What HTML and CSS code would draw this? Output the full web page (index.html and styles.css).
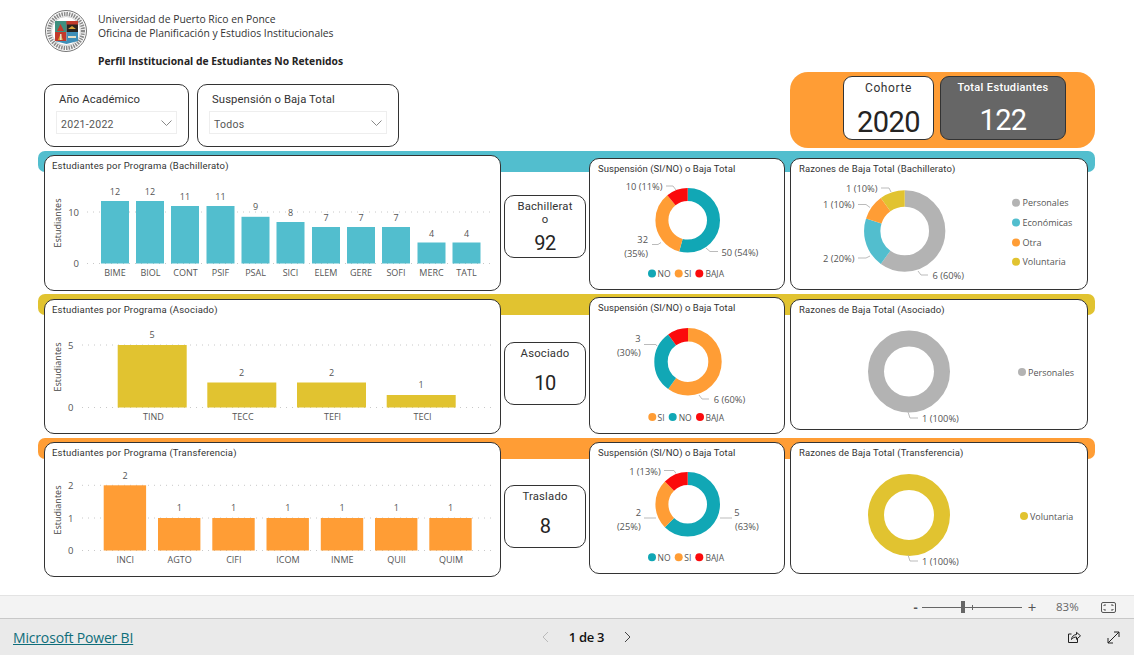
FILE: index.html
```html
<!DOCTYPE html>
<html lang="es">
<head>
<meta charset="utf-8">
<title>Perfil Institucional de Estudiantes No Retenidos</title>
<link rel="stylesheet" href="styles.css">
</head>
<body>
<div class="page">
<main class="stage">
  <section class="top">
    <div class="top-left">
      <header class="brand">
        <svg class="logo" width="42" height="42" viewBox="0 0 42 42">
          <circle class="seal-bg" cx="21" cy="21" r="20.5"/>
          <circle class="seal-ring" cx="21" cy="21" r="17"/>
          <circle class="seal-thin" cx="21" cy="21" r="14.500"/>
          <rect class="q-green" x="10" y="11" width="11.500" height="11"/>
          <rect class="q-dark" x="21.500" y="11" width="11.500" height="11"/>
          <rect class="q-red" x="10" y="22" width="11.500" height="9"/>
          <rect class="q-blue" x="21.500" y="22" width="11.500" height="9"/>
          <path class="q-red" d="M12 21l3.500-7 3.500 7zM21.500 11H33v3.500H21.500z"/>
          <path class="q-gold" d="M23 19l4-3 4 3zM13 30l2.500-6 2.500 6z"/>
          <path class="q-light" d="M23 26h8v2h-8zM15 24h1.500v6H15z"/>
          <path class="q-blue" d="M10 31h23l-11.500 3z"/>
        </svg>
        <div class="brand-text">
          <p class="brand-line">Universidad de Puerto Rico en Ponce</p>
          <p class="brand-line">Oficina de Planificación y Estudios Institucionales</p>
          <h1 class="brand-title">Perfil Institucional de Estudiantes No Retenidos</h1>
        </div>
      </header>
      <div class="filters">
        <div class="slicer slicer-year">
          <div class="slicer-label">Año Académico</div>
          <div class="dropdown"><span class="dropdown-text">2021-2022</span>
            <svg class="chev" width="11" height="6" viewBox="0 0 11 6"><path d="M.5.5l5 5 5-5"/></svg>
          </div>
        </div>
        <div class="slicer slicer-susp">
          <div class="slicer-label">Suspensión o Baja Total</div>
          <div class="dropdown"><span class="dropdown-text">Todos</span>
            <svg class="chev" width="11" height="6" viewBox="0 0 11 6"><path d="M.5.5l5 5 5-5"/></svg>
          </div>
        </div>
      </div>
    </div>
    <div class="summary">
      <div class="stat stat-cohort">
        <div class="stat-label">Cohorte</div>
        <div class="stat-value">2020</div>
      </div>
      <div class="stat stat-total">
        <div class="stat-label">Total Estudiantes</div>
        <div class="stat-value">122</div>
      </div>
    </div>
  </section>

  <!-- Bachillerato -->
  <section class="row row-1">
    <div class="band band-teal"></div>
    <article class="tile t-chart">
      <h2 class="tile-title">Estudiantes por Programa (Bachillerato)</h2>
      <svg width="455" height="117" viewBox="45 172 455 117">
        <line class="grid" x1="87" x2="495" y1="212" y2="212"/>
        <line class="grid" x1="87" x2="495" y1="263.5" y2="263.5"/>
        <text class="axis-title" transform="translate(57 223) rotate(-90)">Estudiantes</text>
        <text class="axis end" x="79" y="212">10</text>
        <text class="axis end" x="79" y="263.5">0</text>
        <g class="f-teal">
          <rect x="101" y="201" width="28" height="62.5"/>
          <rect x="136" y="201" width="28" height="62.5"/>
          <rect x="171" y="206" width="28" height="57.5"/>
          <rect x="206.500" y="206" width="28" height="57.5"/>
          <rect x="241.500" y="216.800" width="28" height="46.7"/>
          <rect x="276.500" y="222" width="28" height="41.5"/>
          <rect x="312" y="227" width="28" height="36.500"/>
          <rect x="347" y="227" width="28" height="36.500"/>
          <rect x="382" y="227" width="28" height="36.500"/>
          <rect x="417.500" y="242.500" width="28" height="21"/>
          <rect x="452.500" y="242.500" width="28" height="21"/>
        </g>
        <g class="val">
          <text x="115" y="191.500">12</text><text x="150" y="191.500">12</text>
          <text x="185" y="196.500">11</text><text x="220.500" y="196.500">11</text>
          <text x="255.500" y="206.500">9</text><text x="290.500" y="212">8</text>
          <text x="326" y="217.500">7</text><text x="361" y="217.500">7</text>
          <text x="396" y="217.500">7</text><text x="431.500" y="233">4</text>
          <text x="466.500" y="233">4</text>
        </g>
        <g class="cat">
          <text x="115" y="272.500">BIME</text><text x="150.500" y="272.500">BIOL</text>
          <text x="185.500" y="272.500">CONT</text><text x="220.500" y="272.500">PSIF</text>
          <text x="255.500" y="272.500">PSAL</text><text x="290.500" y="272.500">SICI</text>
          <text x="326" y="272.500">ELEM</text><text x="361" y="272.500">GERE</text>
          <text x="396" y="272.500">SOFI</text><text x="431.500" y="272.500">MERC</text>
          <text x="466.500" y="272.500">TATL</text>
        </g>
      </svg>
    </article>
    <article class="kpi">
      <div class="kpi-label">Bachillerat<br>o</div>
      <div class="kpi-value kpi-value-wrapped">92</div>
    </article>
    <article class="tile t-donut">
      <h2 class="tile-title">Suspensión (SI/NO) o Baja Total</h2>
      <svg width="194" height="114" viewBox="590 175 194 114">
        <g class="ring ring-s" transform="rotate(-90 687.700 220.300)">
          <circle class="s-no" cx="687.700" cy="220.300" r="25.800" pathLength="100" stroke-dasharray="54.300 45.700"/>
          <circle class="s-or" cx="687.700" cy="220.300" r="25.800" pathLength="100" stroke-dasharray="34.800 65.200" stroke-dashoffset="-54.300"/>
          <circle class="s-red" cx="687.700" cy="220.300" r="25.800" pathLength="100" stroke-dasharray="10.900 89.100" stroke-dashoffset="-89.100"/>
        </g>
        <path class="lead" d="M666 186h7l3 4M652 244.500h6l3-2M706 248l4 3.500h8"/>
        <text class="lab end" x="662.500" y="186.500">10 (11%)</text>
        <text class="lab end" x="648" y="239">32</text>
        <text class="lab end" x="648" y="253">(35%)</text>
        <text class="lab" x="721.500" y="252">50 (54%)</text>
        <circle class="f-no" cx="652" cy="273.500" r="4"/><text class="leg" x="657.500" y="273.500">NO</text>
        <circle class="f-or" cx="678.700" cy="273.500" r="4"/><text class="leg" x="684.300" y="273.500">SI</text>
        <circle class="f-red" cx="699.300" cy="273.500" r="4"/><text class="leg" x="705.500" y="273.500">BAJA</text>
      </svg>
    </article>
    <article class="tile t-reason">
      <h2 class="tile-title">Razones de Baja Total (Bachillerato)</h2>
      <svg width="296" height="114" viewBox="791 175 296 114">
        <g class="ring ring-r" transform="rotate(-90 904.700 231)">
          <circle class="s-gray" cx="904.700" cy="231" r="32.500" pathLength="100" stroke-dasharray="60 40"/>
          <circle class="s-teal" cx="904.700" cy="231" r="32.500" pathLength="100" stroke-dasharray="20 80" stroke-dashoffset="-60"/>
          <circle class="s-or" cx="904.700" cy="231" r="32.500" pathLength="100" stroke-dasharray="10 90" stroke-dashoffset="-80"/>
          <circle class="s-yel" cx="904.700" cy="231" r="32.500" pathLength="100" stroke-dasharray="10 90" stroke-dashoffset="-90"/>
        </g>
        <path class="lead" d="M881 188h8l2 4M858 204.500h8l4 3M858 258h8l4-2M918 271l3 4h7"/>
        <text class="lab end" x="877.500" y="188.500">1 (10%)</text>
        <text class="lab end" x="854.500" y="204.500">1 (10%)</text>
        <text class="lab end" x="854.500" y="258.500">2 (20%)</text>
        <text class="lab" x="932.500" y="275.500">6 (60%)</text>
        <circle class="f-gray" cx="1016" cy="202.700" r="4"/><text class="key" x="1022.500" y="202.700">Personales</text>
        <circle class="f-teal" cx="1016" cy="222.500" r="4"/><text class="key" x="1022.500" y="222.500">Económicas</text>
        <circle class="f-or" cx="1016" cy="242.500" r="4"/><text class="key" x="1022.500" y="242.500">Otra</text>
        <circle class="f-yel" cx="1016" cy="261.700" r="4"/><text class="key" x="1022.500" y="261.700">Voluntaria</text>
      </svg>
    </article>
  </section>

  <!-- Asociado -->
  <section class="row row-2">
    <div class="band band-yellow"></div>
    <article class="tile t-chart">
      <h2 class="tile-title">Estudiantes por Programa (Asociado)</h2>
      <svg width="455" height="117" viewBox="45 316 455 117">
        <line class="grid" x1="82" x2="495" y1="345" y2="345"/>
        <line class="grid" x1="82" x2="495" y1="407.500" y2="407.500"/>
        <text class="axis-title" transform="translate(57 367) rotate(-90)">Estudiantes</text>
        <text class="axis end" x="73.500" y="345">5</text>
        <text class="axis end" x="73.500" y="407.500">0</text>
        <g class="f-yel">
          <rect x="117.700" y="345" width="69" height="62.500"/>
          <rect x="207.300" y="382.500" width="69" height="25"/>
          <rect x="297" y="382.500" width="69" height="25"/>
          <rect x="386.700" y="395" width="69" height="12.500"/>
        </g>
        <g class="val">
          <text x="152" y="334.700">5</text><text x="241.500" y="372.700">2</text>
          <text x="331.500" y="372.700">2</text><text x="421" y="384.700">1</text>
        </g>
        <g class="cat">
          <text x="153.500" y="416.700">TIND</text><text x="243" y="416.700">TECC</text>
          <text x="332.500" y="416.700">TEFI</text><text x="422.500" y="416.700">TECI</text>
        </g>
      </svg>
    </article>
    <article class="kpi">
      <div class="kpi-label">Asociado</div>
      <div class="kpi-value">10</div>
    </article>
    <article class="tile t-donut">
      <h2 class="tile-title">Suspensión (SI/NO) o Baja Total</h2>
      <svg width="194" height="118" viewBox="590 314 194 118">
        <g class="ring ring-s2" transform="rotate(-90 688 361.700)">
          <circle class="s-or" cx="688" cy="361.700" r="27" pathLength="100" stroke-dasharray="60 40"/>
          <circle class="s-no" cx="688" cy="361.700" r="27" pathLength="100" stroke-dasharray="30 70" stroke-dashoffset="-60"/>
          <circle class="s-red" cx="688" cy="361.700" r="27" pathLength="100" stroke-dasharray="10 90" stroke-dashoffset="-90"/>
        </g>
        <path class="lead" d="M644 344.500h12l1 1.500M699 395l3 4h7"/>
        <text class="lab mid" x="638" y="338.300">3</text>
        <text class="lab end" x="640.700" y="352">(30%)</text>
        <text class="lab" x="713.700" y="399.700">6 (60%)</text>
        <circle class="f-or" cx="652.300" cy="417" r="4"/><text class="leg" x="657.500" y="417">SI</text>
        <circle class="f-no" cx="672.700" cy="417" r="4"/><text class="leg" x="678.700" y="417">NO</text>
        <circle class="f-red" cx="700" cy="417" r="4"/><text class="leg" x="705.500" y="417">BAJA</text>
      </svg>
    </article>
    <article class="tile t-reason">
      <h2 class="tile-title">Razones de Baja Total (Asociado)</h2>
      <svg width="296" height="113" viewBox="791 316 296 113">
        <circle class="s-gray ring-full" cx="909" cy="371.500" r="33"/>
        <path class="lead" d="M908 412l2 6h8"/>
        <text class="lab" x="922" y="418">1 (100%)</text>
        <circle class="f-gray" cx="1022" cy="372" r="4"/><text class="key" x="1028" y="372">Personales</text>
      </svg>
    </article>
  </section>

  <!-- Transferencia -->
  <section class="row row-3">
    <div class="band band-orange"></div>
    <article class="tile t-chart">
      <h2 class="tile-title">Estudiantes por Programa (Transferencia)</h2>
      <svg width="455" height="117" viewBox="45 459 455 117">
        <line class="grid" x1="82" x2="495" y1="485.300" y2="485.300"/>
        <line class="grid" x1="82" x2="495" y1="518" y2="518"/>
        <line class="grid" x1="82" x2="495" y1="550.500" y2="550.500"/>
        <text class="axis-title" transform="translate(57 510) rotate(-90)">Estudiantes</text>
        <text class="axis end" x="73.500" y="485.300">2</text>
        <text class="axis end" x="73.500" y="518">1</text>
        <text class="axis end" x="73.500" y="550.500">0</text>
        <g class="f-or">
          <rect x="103.700" y="485.300" width="42.400" height="65.200"/>
          <rect x="158" y="518" width="42.400" height="32.500"/>
          <rect x="212.300" y="518" width="42.400" height="32.500"/>
          <rect x="266.500" y="518" width="42.400" height="32.500"/>
          <rect x="320.800" y="518" width="42.400" height="32.500"/>
          <rect x="375" y="518" width="42.400" height="32.500"/>
          <rect x="429.300" y="518" width="42.400" height="32.500"/>
        </g>
        <g class="val">
          <text x="125" y="475.700">2</text><text x="179.300" y="507.700">1</text>
          <text x="233.500" y="507.700">1</text><text x="287.800" y="507.700">1</text>
          <text x="342" y="507.700">1</text><text x="396.300" y="507.700">1</text>
          <text x="450.500" y="507.700">1</text>
        </g>
        <g class="cat">
          <text x="125.300" y="559.500">INCI</text><text x="179.700" y="559.500">AGTO</text>
          <text x="233.800" y="559.500">CIFI</text><text x="288" y="559.500">ICOM</text>
          <text x="342.300" y="559.500">INME</text><text x="396.500" y="559.500">QUII</text>
          <text x="451" y="559.500">QUIM</text>
        </g>
      </svg>
    </article>
    <article class="kpi">
      <div class="kpi-label">Traslado</div>
      <div class="kpi-value">8</div>
    </article>
    <article class="tile t-donut">
      <h2 class="tile-title">Suspensión (SI/NO) o Baja Total</h2>
      <svg width="194" height="114" viewBox="590 459 194 114">
        <g class="ring ring-s" transform="rotate(-90 687.700 504.300)">
          <circle class="s-no" cx="687.700" cy="504.300" r="25.800" pathLength="100" stroke-dasharray="62.500 37.500"/>
          <circle class="s-or" cx="687.700" cy="504.300" r="25.800" pathLength="100" stroke-dasharray="25 75" stroke-dashoffset="-62.500"/>
          <circle class="s-red" cx="687.700" cy="504.300" r="25.800" pathLength="100" stroke-dasharray="12.500 87.500" stroke-dashoffset="-87.500"/>
        </g>
        <path class="lead" d="M664 470.500h10l2 3M644 518h12M720 518h12"/>
        <text class="lab end" x="660.700" y="471.700">1 (13%)</text>
        <text class="lab mid" x="638.300" y="512.700">2</text>
        <text class="lab end" x="640.700" y="526.300">(25%)</text>
        <text class="lab mid" x="737" y="512.700">5</text>
        <text class="lab" x="735" y="526.300">(63%)</text>
        <circle class="f-no" cx="652" cy="557.300" r="4"/><text class="leg" x="657.500" y="557.300">NO</text>
        <circle class="f-or" cx="678.700" cy="557.300" r="4"/><text class="leg" x="684.300" y="557.300">SI</text>
        <circle class="f-red" cx="699.300" cy="557.300" r="4"/><text class="leg" x="705.500" y="557.300">BAJA</text>
      </svg>
    </article>
    <article class="tile t-reason">
      <h2 class="tile-title">Razones de Baja Total (Transferencia)</h2>
      <svg width="296" height="114" viewBox="791 459 296 114">
        <circle class="s-yel ring-full" cx="909" cy="515" r="33"/>
        <path class="lead" d="M908 555l2 6h8"/>
        <text class="lab" x="922" y="561.500">1 (100%)</text>
        <circle class="f-yel" cx="1024" cy="516" r="4"/><text class="key" x="1030" y="516">Voluntaria</text>
      </svg>
    </article>
  </section>
</main>

<div class="zoombar">
  <span class="zoom-sign">-</span>
  <div class="slider"><span class="thumb"></span><span class="tick"></span></div>
  <span class="zoom-sign zoom-plus">+</span>
  <span class="zoom-pct">83%</span>
  <svg class="fit" width="15" height="11" viewBox="0 0 15 11">
    <rect x="0.500" y="0.500" width="14" height="10" rx="1.500"/>
    <path d="M3 4V3h2M12 4V3h-2M3 7v1h2M12 7v1h-2"/>
  </svg>
</div>

<footer class="footer">
  <a class="pbi-link" href="#">Microsoft Power BI</a>
  <nav class="pager">
    <svg class="pg pg-off" width="8" height="12" viewBox="0 0 8 12"><path d="M7 1L2 6l5 5"/></svg>
    <span class="pg-text">1 de 3</span>
    <svg class="pg" width="8" height="12" viewBox="0 0 8 12"><path d="M1 1l5 5-5 5"/></svg>
  </nav>
  <div class="foot-icons">
    <svg class="foot-ico" width="14" height="14" viewBox="0 0 14 14">
      <path d="M10.500 9v3.500h-9V4h3"/><path d="M4.500 9.500c.3-3 2.300-4.800 5-5V2.300l4 3.500-4 3.500V7c-2 0-3.800.8-5 2.500z"/>
    </svg>
    <svg class="foot-ico" width="13" height="13" viewBox="0 0 13 13">
      <path d="M1 12L12 1M7 1h5v5M1 7v5h5"/>
    </svg>
  </div>
</footer>
</div>
</body>
</html>
```

FILE: styles.css
```css
* { box-sizing: border-box; }
html, body { margin: 0; padding: 0; }
body { background: #fff; font-family: Roboto, "Liberation Sans", sans-serif; color: #252423; overflow: hidden; }
.page { width: 1134px; height: 655px; display: flex; flex-direction: column; }
.stage { height: 595px; padding-left: 38px; }

/* top */
.top { height: 151px; display: flex; justify-content: space-between; width: 1057px; }
.top-left { padding-left: 6px; }
.brand { height: 84px; display: flex; padding-top: 10px; }
.logo { display: block; margin-left: 1px; }
.seal-bg { fill: #fafafa; stroke: #777; stroke-width: 1; }
.seal-ring { fill: none; stroke: #8a8a8a; stroke-width: 4; stroke-dasharray: 1.500 1; }
.seal-thin { fill: #fff; stroke: #aaa; stroke-width: .5; }
.q-green { fill: #3e8f7f; }
.q-dark { fill: #2b2420; }
.q-red { fill: #c23a2b; }
.q-blue { fill: #3f8fb8; }
.q-gold { fill: #d9a53a; }
.q-light { fill: #e8e0c8; }
.brand-text { margin-left: 11px; }
.brand-line { margin: 0; font: 10.350px/14px "Open Sans", sans-serif; color: #333; }
.brand-line:first-child { margin-top: 2px; }
.brand-title { margin: 14px 0 0; font: 700 10.300px/14px "Open Sans", sans-serif; color: #252423; }
.filters { display: flex; gap: 8px; }
.slicer { height: 63px; border: 1px solid #333; border-radius: 10px; padding: 7px 11px 0; background: #fff; }
.slicer-year { width: 145px; }
.slicer-susp { width: 202px; }
.slicer-label { font-size: 11.300px; line-height: 15px; letter-spacing: .1px; padding-left: 3px; color: #333; }
.dropdown { margin-top: 4px; height: 23px; border: 1px solid #eee; display: flex; align-items: center; justify-content: space-between; padding: 0 4px; font-size: 10.5px; letter-spacing: .3px; color: #555; }
.dropdown-text { padding-top: 3px; }
.chev { display: block; }
.chev path { fill: none; stroke: #888; stroke-width: 1; }

.summary { width: 305px; height: 76px; margin-top: 72px; background: #ff9d35; border-radius: 18px; display: flex; gap: 6px; padding: 4px 0 0 53px; }
.stat { height: 64px; border: 1px solid #333; border-radius: 9px; text-align: center; }
.stat-cohort { width: 91px; background: #fff; padding-top: 4px; }
.stat-total { width: 126px; background: #666; color: #fff; padding-top: 3px; }
.stat-label { font-size: 12px; line-height: 15px; letter-spacing: .6px; color: #333; }
.stat-total .stat-label { font-size: 11px; font-weight: 500; letter-spacing: .35px; color: #fff; }
.stat-value { font-size: 29px; line-height: 36px; margin-top: 8px; letter-spacing: -.6px; color: #252423; }
.stat-total .stat-value { color: #fff; margin-top: 7px; }

/* rows */
.row { display: grid; grid-template-columns: 6px 457px 3px 82px 3px 196px 5px 298px 7px; align-items: start; }
.row-1 { height: 143px; }
.row-2 { height: 144px; }
.row-3 { height: 157px; }
.band { grid-column: 1 / -1; grid-row: 1; height: 21px; border-radius: 7px; }
.band-teal { background: #52bece; }
.band-yellow { background: #e1c330; }
.band-orange { background: #ff9d35; }
.tile, .kpi { grid-row: 1; background: #fff; border: 1px solid #333; border-radius: 10px; }
.tile svg { display: block; overflow: visible; }
.t-chart { grid-column: 2; }
.kpi { grid-column: 4; height: 63px; text-align: center; padding-top: 4px; }
.t-donut { grid-column: 6; }
.t-reason { grid-column: 8; }
.tile-title { margin: 0; height: 16px; padding: 3px 0 0 7px; font: 400 9.500px/13px Roboto, sans-serif; color: #333; white-space: nowrap; }
.t-chart .tile-title { letter-spacing: .2px; }
.t-donut .tile-title { letter-spacing: .05px; padding-left: 8px; }
.t-reason .tile-title { letter-spacing: .12px; padding-left: 8px; }

.row-1 .t-chart { margin-top: 4px; height: 136px; }
.row-1 .kpi { margin-top: 44px; }
.row-1 .t-donut, .row-1 .t-reason { margin-top: 7px; height: 132px; }
.row-2 .t-chart { margin-top: 5px; height: 135px; }
.row-2 .kpi { margin-top: 48px; }
.row-2 .t-donut { margin-top: 3px; height: 137px; }
.row-2 .t-reason { margin-top: 5px; height: 131px; }
.row-3 .t-chart { margin-top: 4px; height: 135px; }
.row-3 .kpi { margin-top: 47px; }
.row-3 .t-donut, .row-3 .t-reason { margin-top: 4px; height: 132px; }

.kpi-label { min-height: 23px; font-size: 11.300px; line-height: 13px; letter-spacing: .2px; color: #333; }
.kpi-value { font-size: 20px; line-height: 26px; letter-spacing: -.5px; color: #252423; }
.kpi-value-wrapped { margin-top: 4px; }

/* svg */
svg text { font-family: "Open Sans", sans-serif; dominant-baseline: central; }
.grid { stroke: #c8c8c8; stroke-width: 1; stroke-dasharray: 1 5; }
.axis { font-size: 9.500px; fill: #555; }
.axis-title { font-size: 9px; fill: #444; text-anchor: middle; }
.end { text-anchor: end; }
.mid { text-anchor: middle; }
.val text { font-size: 9px; fill: #555; text-anchor: middle; }
.cat text { font-size: 9px; fill: #555; text-anchor: middle; }
.lab { font-size: 9.300px; fill: #555; }
.key { font-size: 9px; fill: #555; }
.leg { font-size: 8.500px; fill: #555; }
.lead { fill: none; stroke: #bbb; stroke-width: 1; }
.ring circle, .ring-full { fill: none; }
.ring-s circle { stroke-width: 13; }
.ring-s2 circle { stroke-width: 13.400; }
.ring-r circle { stroke-width: 16.300; }
.ring-full { stroke-width: 16; }
.f-teal { fill: #52bece; }
.f-yel { fill: #e1c330; }
.f-or { fill: #ff9d35; }
.f-no { fill: #11a7b5; }
.f-red { fill: #fb0a0c; }
.f-gray { fill: #b3b3b3; }
.s-no { stroke: #11a7b5; }
.s-or { stroke: #ff9d35; }
.s-red { stroke: #fb0a0c; }
.s-gray { stroke: #b3b3b3; }
.s-teal { stroke: #52bece; }
.s-yel { stroke: #e1c330; }

/* zoom bar */
.zoombar { height: 24px; background: #f3f3f3; border-top: 1px solid #e3e3e3; border-bottom: 1px solid #c8c8c8; display: flex; align-items: center; padding-left: 912px; color: #555; }
.zoom-sign { width: 7px; font: 700 13px/1 "Open Sans", sans-serif; text-align: center; }
.zoom-plus { margin-left: 5px; font-weight: 400; font-size: 15px; width: 10px; }
.slider { position: relative; width: 100px; height: 1px; margin-left: 3px; background: #666; }
.thumb { position: absolute; left: 39px; top: -6px; width: 4px; height: 12px; background: #666; }
.tick { position: absolute; left: 50px; top: -2px; width: 1px; height: 5px; background: #666; }
.zoom-pct { margin-left: 19px; width: 24px; font: 11.500px/1 "Open Sans", sans-serif; color: #666; }
.fit { margin-left: 21px; }
.fit rect, .fit path { fill: none; stroke: #555; stroke-width: 1; }

/* footer */
.footer { height: 36px; background: #eaeaea; display: grid; grid-template-columns: 1fr auto 1fr; align-items: center; padding: 0 14px 0 13px; }
.pbi-link { justify-self: start; font: 14px/18px "Open Sans", sans-serif; color: #0f6e7a; letter-spacing: -.17px; padding-top: 2px; }
.pager { display: flex; align-items: center; gap: 20px; margin-left: 40px; }
.pg path { fill: none; stroke: #444; stroke-width: 1; }
.pg-off path { stroke: #bbb; }
.pg-text { font: 600 13px/18px "Open Sans", sans-serif; color: #111; letter-spacing: -.3px; }
.foot-icons { justify-self: end; display: flex; align-items: center; gap: 26px; }
.foot-ico { display: block; }
.foot-ico path { fill: none; stroke: #222; stroke-width: 1; }
```
